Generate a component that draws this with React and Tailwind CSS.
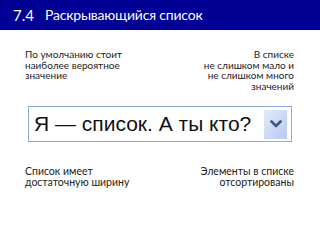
export default function App() {
  return (
    <div className="w-[320px] h-[226px] bg-white overflow-hidden" style={{ fontFamily: 'Lato, "Open Sans", sans-serif' }}>
      <div className="h-[30px] bg-[#000094] flex items-center pl-[13px] text-white text-[14px] leading-none">
        <span className="w-[32px] text-[15px]">7.4</span>
        <span className="tracking-[-0.2px]">Раскрывающийся список</span>
      </div>

      <div className="flex justify-between pl-[25px] pr-[26px] pt-[19px] text-[10px] leading-[10.5px] text-[#222]">
        <p>По умолчанию стоит<br />наиболее вероятное<br />значение</p>
        <p className="text-right">В списке<br />не слишком мало и<br />не слишком много<br />значений</p>
      </div>

      <div className="mx-[28px] mt-[15px] h-[36px] border border-[#8eaad8] flex items-center justify-between pl-[5px] pr-[4px]">
        <span className="text-[21px] text-[#111]" style={{ fontFamily: '"Liberation Sans", Arial, sans-serif' }}>Я — список. А ты кто?</span>
        <div className="w-[23px] h-[29px] bg-gradient-to-br from-[#e4ebfa] to-[#b8c8ef] flex items-center justify-center">
          <svg width="12" height="8" viewBox="0 0 12 8">
            <path d="M1.5 1.5 L6 6 L10.5 1.5" stroke="#3f5585" strokeWidth="2.6" fill="none" strokeLinecap="round" strokeLinejoin="round" />
          </svg>
        </div>
      </div>

      <div className="flex justify-between pl-[25px] pr-[26px] pt-[24px] text-[10.5px] leading-[11px] text-[#222]">
        <p>Список имеет<br />достаточную ширину</p>
        <p className="text-right">Элементы в списке<br />отсортированы</p>
      </div>
    </div>
  );
}
